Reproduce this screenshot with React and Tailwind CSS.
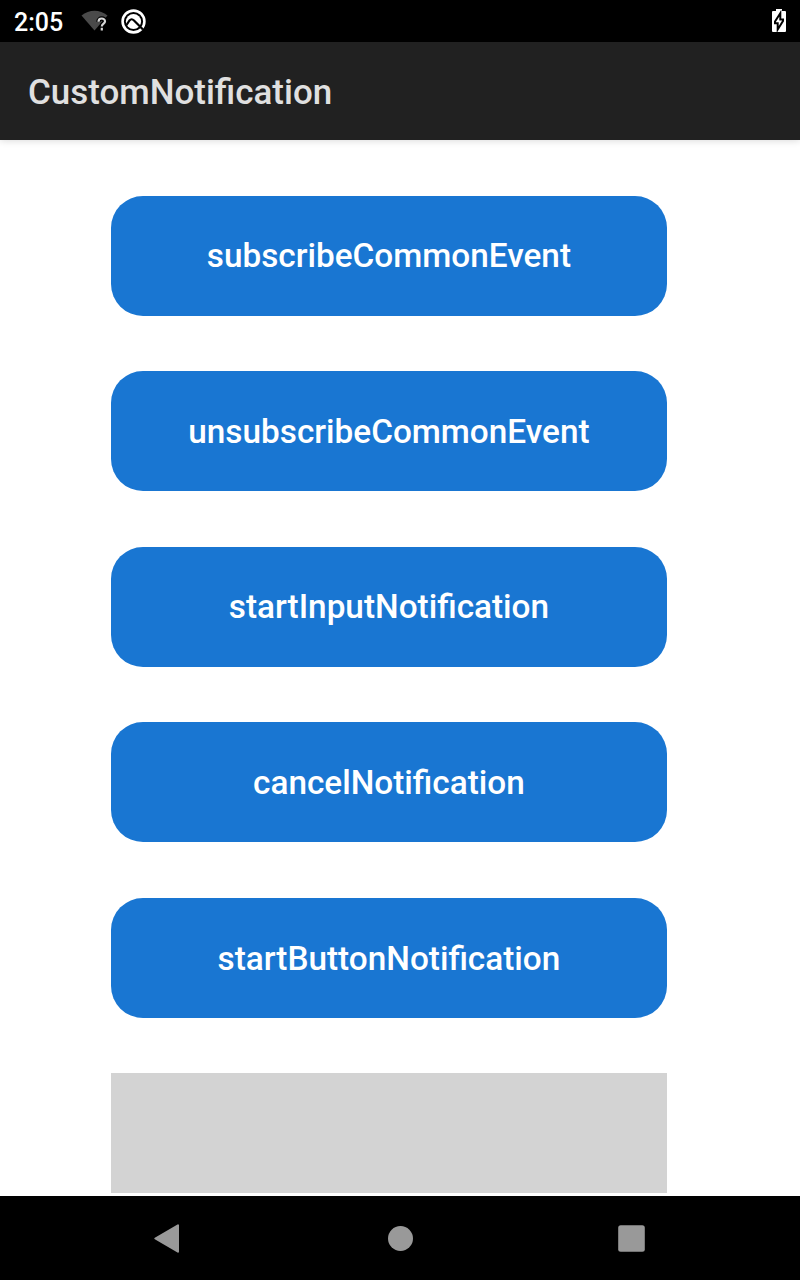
const labels = ['subscribeCommonEvent', 'unsubscribeCommonEvent', 'startInputNotification', 'cancelNotification', 'startButtonNotification'];

function StatusBar() {
  return (
    <div className="h-[42px] shrink-0 bg-black flex items-center text-white pl-[14px] pr-[14px]">
      <span className="text-[25px] leading-[42px] font-medium w-[67px] pt-[3px]">2:05</span>
      <svg width="28" height="22" viewBox="0 0 28 22">
        <path d="M0.500 5.500C8 -1 19 -1 26.500 5.500L13.500 20.500Z" fill="#4a4a4a" />
        <path d="M17.500 11.700C17.500 7.500 24 7.500 24 11.500C24 13.600 20.800 13.600 20.800 16.500M20.800 17.800V20.400" fill="none" stroke="#000" strokeWidth="4.500" />
        <path d="M17.500 11.700C17.500 7.500 24 7.500 24 11.500C24 13.600 20.800 13.600 20.800 16.500M20.800 17.800V20.400" fill="none" stroke="#d8d8d8" strokeWidth="2.200" />
      </svg>
      <svg className="ml-[12px]" width="25" height="25" viewBox="0 0 25 25" fill="none" stroke="#fff">
        <circle cx="12.500" cy="12.500" r="10.900" strokeWidth="2.600" />
        <circle cx="12.500" cy="12.500" r="7.600" fill="#fff" stroke="none" />
        <path d="M5.500 16L8.500 11.500Q10.500 9 13 11.500L22 20.500" stroke="#000" strokeWidth="2.200" />
      </svg>
      <svg className="ml-auto" width="14" height="24" viewBox="0 0 14 24">
        <path d="M4 0H10V2H13Q14 2 14 3V22Q14 23 13 23H1Q0 23 0 22V3Q0 2 1 2H4Z" fill="#fff" />
        <path d="M8.300 4.200L3 12.500V14.300H5.700V20.500L11 12V10.500H8.300Z" fill="#fff" stroke="#000" strokeWidth="2" />
      </svg>
    </div>
  );
}

export default function App() {
  return (
    <div className="w-[800px] h-[1280px] flex flex-col overflow-hidden bg-white font-['Roboto',sans-serif]">
      <StatusBar />
      <header className="relative h-[98px] shrink-0 bg-[#212121] text-[#e0e0e0] flex items-center pl-7 pt-[5px] shadow-[0_1px_7px_rgba(0,0,0,0.14)]">
        <h1 className="text-[34.950px] font-medium">CustomNotification</h1>
      </header>
      <main className="h-[1056px] shrink-0 overflow-hidden flex flex-col gap-[55.6px] pt-[55.500px] pl-[111px]">
        {labels.map((label) => (
          <button key={label} className="w-[555.5px] h-[120px] shrink-0 rounded-[32px] bg-[#1976d2] text-white text-[33.350px] font-medium pt-[1.500px] pl-[0.300px]">{label}</button>
        ))}
        <div className="w-[555.5px] h-[120px] shrink-0 bg-[#d3d3d3]" />
      </main>
      <nav className="h-[84px] bg-black">
        <svg width="800" height="84" fill="#999">
          <path d="M155.300 42.500L178 29.300V55.700Z" stroke="#999" strokeWidth="2" strokeLinejoin="round" />
          <circle cx="400.500" cy="42.500" r="12.500" />
          <rect x="618.200" y="29.200" width="26.600" height="26.600" rx="2.500" />
        </svg>
      </nav>
    </div>
  );
}
